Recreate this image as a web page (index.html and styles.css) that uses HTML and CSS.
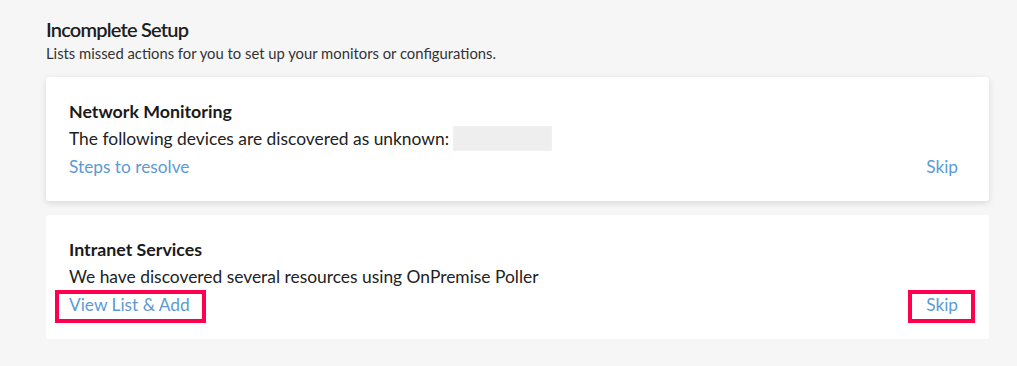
FILE: index.html
```html
<!DOCTYPE html>
<html lang="en">
<head>
<meta charset="utf-8">
<title>Incomplete Setup</title>
<link rel="stylesheet" href="styles.css">
</head>
<body>
<main class="page">
  <h1 class="title">Incomplete Setup</h1>
  <p class="subtitle">Lists missed actions for you to set up your monitors or configurations.</p>

  <section class="card card-raised">
    <h2 class="card-title">Network Monitoring</h2>
    <p class="card-text">The following devices are discovered as unknown: <span class="redacted"></span></p>
    <div class="card-actions">
      <a class="link" href="#">Steps to resolve</a>
      <a class="link" href="#">Skip</a>
    </div>
  </section>

  <section class="card">
    <h2 class="card-title">Intranet Services</h2>
    <p class="card-text">We have discovered several resources using OnPremise Poller</p>
    <div class="card-actions">
      <a class="link marked marked-left" href="#">View List &amp; Add</a>
      <a class="link marked marked-right" href="#">Skip</a>
    </div>
  </section>
</main>
</body>
</html>
```

FILE: styles.css
```css
* { box-sizing: border-box; }

html, body {
  margin: 0;
  padding: 0;
  background: #f6f6f6;
}

body {
  font-family: Lato, "Open Sans", "Liberation Sans", sans-serif;
  color: #222;
}

.page {
  padding: 17px 28px 0 46px;
}

.title {
  margin: 0;
  font-size: 20px;
  line-height: 24px;
  font-weight: 600;
  letter-spacing: -0.8px;
  color: #1d1d1d;
}

.subtitle {
  margin: 2px 0 0;
  font-size: 14.8px;
  line-height: 20px;
  color: #333;
}

.card {
  margin-top: 14px;
  background: #fff;
  border-radius: 3px;
  padding: 20px 31px 20px 23px;
}

.card-raised {
  box-shadow: 0 2px 6px rgba(0, 0, 0, 0.12);
}

.card-title {
  margin: 0;
  font-size: 17.8px;
  line-height: 28px;
  font-weight: 700;
  color: #1a1a1a;
}

.card-text {
  margin: 0;
  font-size: 17.4px;
  line-height: 28px;
  color: #222;
}

.redacted {
  display: inline-block;
  width: 99px;
  height: 25px;
  margin-left: 0;
  vertical-align: -6px;
  background: #eeeeee;
  box-shadow: 0 0 3px 1px #f1f1f1 inset;
}

.card-actions {
  display: flex;
  justify-content: space-between;
  align-items: baseline;
}

.link {
  display: inline-block;
  font-size: 17.3px;
  line-height: 28px;
  color: #5b9bd5;
  text-decoration: none;
}

.marked {
  position: relative;
}

.marked::after {
  content: "";
  position: absolute;
  top: -1px;
  bottom: -4px;
  border: 4px solid #ff0050;
}

.marked-left::after {
  left: -14px;
  right: -16px;
}

.marked-right::after {
  left: -18px;
  right: -17px;
}
```
